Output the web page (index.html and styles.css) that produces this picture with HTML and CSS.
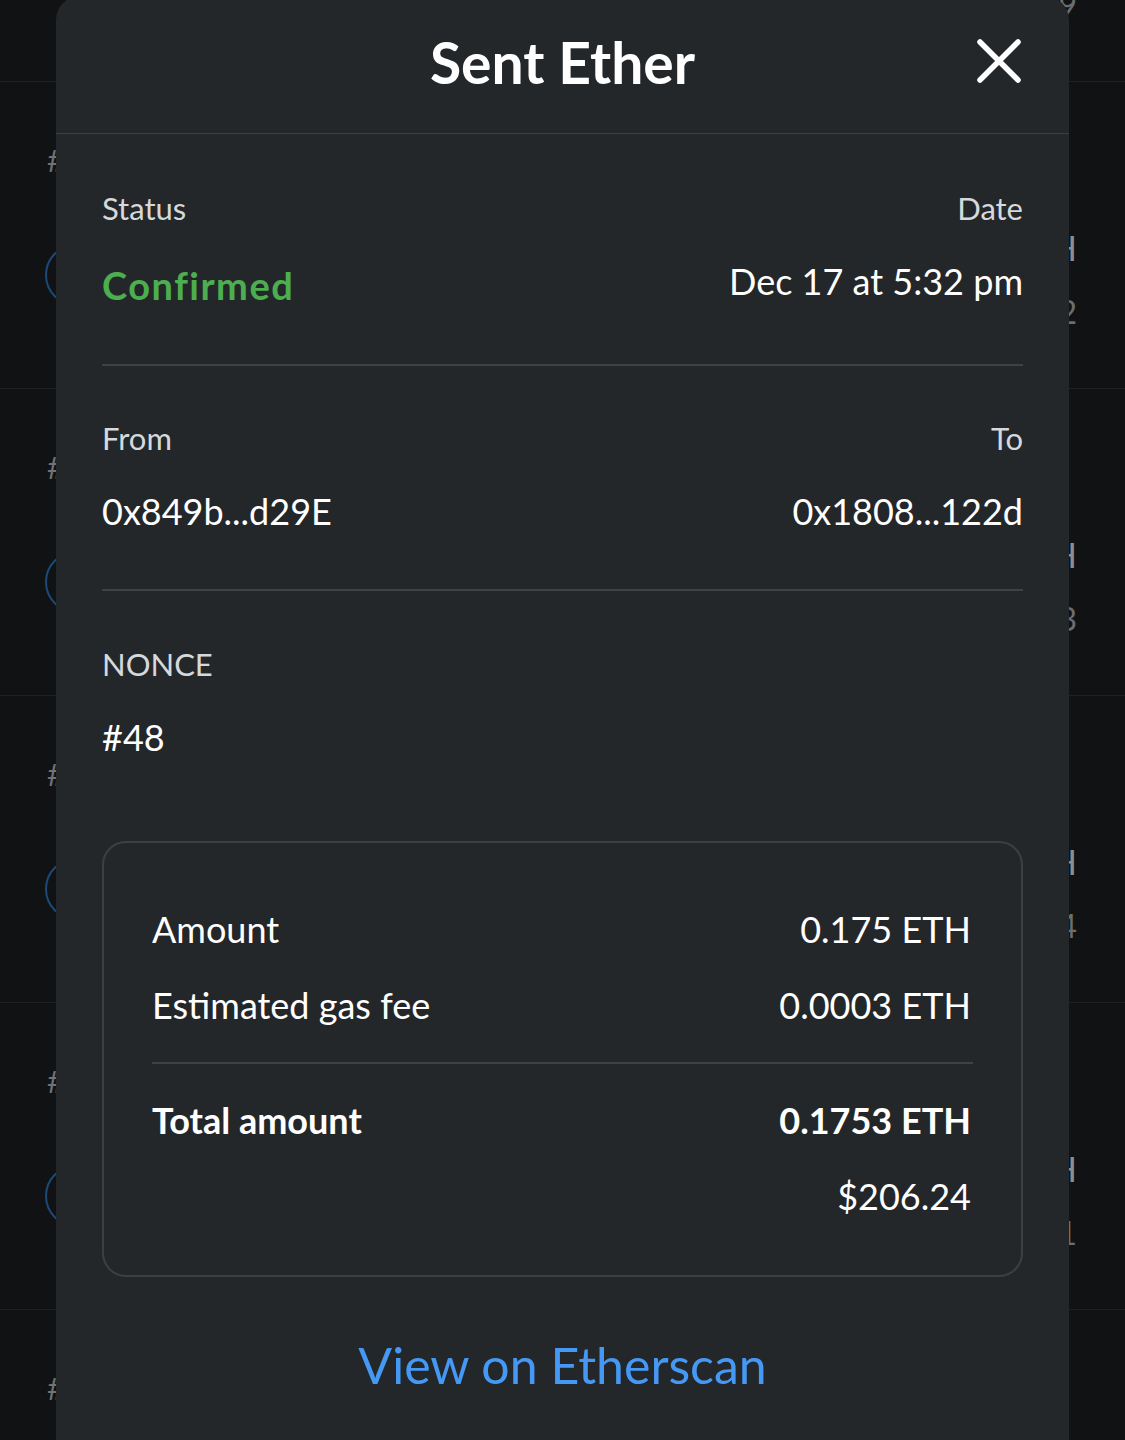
FILE: index.html
```html
<!DOCTYPE html>
<html>
<head>
<meta charset="utf-8">
<link rel="stylesheet" href="styles.css">
</head>
<body>
<div class="list">
  <div class="row"><div class="row-left"><div class="hash">#49</div><div class="ring"></div></div><div class="row-right"><div class="eth">-0.1 ETH</div><div class="fiat">-$117.89</div></div></div>
  <div class="row"><div class="row-left"><div class="hash">#48</div><div class="ring"></div></div><div class="row-right"><div class="eth">-0.175 ETH</div><div class="fiat">-$206.22</div></div></div>
  <div class="row"><div class="row-left"><div class="hash">#47</div><div class="ring"></div></div><div class="row-right"><div class="eth">-0.2 ETH</div><div class="fiat">-$235.73</div></div></div>
  <div class="row"><div class="row-left"><div class="hash">#46</div><div class="ring"></div></div><div class="row-right"><div class="eth">-0.05 ETH</div><div class="fiat">-$58.94</div></div></div>
  <div class="row"><div class="row-left"><div class="hash">#45</div><div class="ring"></div></div><div class="row-right"><div class="eth">-0.3 ETH</div><div class="fiat">-$353.61</div></div></div>
  <div class="row"><div class="row-left"><div class="hash">#44</div><div class="ring"></div></div><div class="row-right"><div class="eth">-0.1 ETH</div><div class="fiat">-$117.87</div></div></div>
</div>

<div class="modal">
  <div class="modal-header">
    <h1 class="title">Sent Ether</h1>
    <svg class="close" width="44" height="44" viewBox="0 0 44 44"><path d="M3 3 L41 41 M41 3 L3 41" stroke="#ffffff" stroke-width="5.5" stroke-linecap="round" fill="none"/></svg>
  </div>
  <div class="modal-body">
    <div class="section section-first">
      <div class="pair">
        <div class="col">
          <div class="label">Status</div>
          <div class="status">Confirmed</div>
        </div>
        <div class="col col-right">
          <div class="label">Date</div>
          <div class="value">Dec 17 at 5:32 pm</div>
        </div>
      </div>
    </div>
    <div class="section section-second">
      <div class="pair">
        <div class="col">
          <div class="label">From</div>
          <div class="value">0x849b...d29E</div>
        </div>
        <div class="col col-right">
          <div class="label">To</div>
          <div class="value">0x1808...122d</div>
        </div>
      </div>
    </div>
    <div class="section section-nonce">
      <div class="label">NONCE</div>
      <div class="value">#48</div>
    </div>
    <div class="summary">
      <div class="sum-row"><span>Amount</span><span>0.175 ETH</span></div>
      <div class="sum-row sum-gap"><span>Estimated gas fee</span><span>0.0003 ETH</span></div>
      <div class="sum-divider"></div>
      <div class="sum-row sum-total"><span>Total amount</span><span>0.1753 ETH</span></div>
      <div class="sum-row sum-gap sum-fiat"><span>$206.24</span></div>
    </div>
    <div class="link">View on Etherscan</div>
  </div>
</div>
</body>
</html>
```
FILE: styles.css
```css
html, body {
  margin: 0;
  padding: 0;
}
body {
  width: 1125px;
  height: 1440px;
  overflow: hidden;
  background: #111214;
  font-family: "Lato", "Open Sans", sans-serif;
  position: relative;
}

/* background list */
.list {
  margin-top: -225px;
}
.row {
  height: 306px;
  border-bottom: 1px solid #1f2124;
  display: flex;
  justify-content: space-between;
}
.row-left {
  padding-left: 47px;
  padding-top: 58px;
}
.hash {
  font-size: 30px;
  line-height: 40px;
  color: #707276;
}
.ring {
  width: 58px;
  height: 58px;
  border: 2px solid #1b4a7a;
  border-radius: 50%;
  margin-top: 64px;
  margin-left: -2px;
}
.row-right {
  padding-right: 48px;
  padding-top: 146px;
  text-align: right;
}
.eth {
  font-size: 34px;
  line-height: 40px;
  color: #8b8e92;
}
.fiat {
  font-size: 32px;
  line-height: 40px;
  margin-top: 24px;
  color: #6a6d71;
}

/* modal */
.modal {
  position: absolute;
  left: 56px;
  top: -4px;
  width: 1013px;
  height: 1480px;
  background: #24272a;
  border-radius: 24px 24px 0 0;
}
.modal-header {
  height: 137px;
  border-bottom: 1px solid #3b3e42;
  display: flex;
  align-items: center;
  justify-content: center;
  position: relative;
}
.title {
  margin: 0 0 6px;
  font-size: 57px;
  font-weight: 700;
  color: #ffffff;
  line-height: 64px;
}
.close {
  position: absolute;
  right: 48px;
  top: 43px;
}
.modal-body {
  padding: 0 46px;
}
.section {
  border-bottom: 2px solid #3e4246;
}
.section-first {
  padding: 54px 0 57px;
}
.section-second {
  padding: 52px 0 56px;
}
.section-nonce {
  border-bottom: none;
  padding: 53px 0 0;
}
.pair {
  display: flex;
  justify-content: space-between;
}
.col-right {
  text-align: right;
}
.label {
  font-size: 31px;
  line-height: 40px;
  color: #d6d9dc;
}
.value {
  font-size: 36px;
  line-height: 44px;
  margin-top: 31px;
  color: #ffffff;
}
.status {
  font-size: 38px;
  line-height: 44px;
  margin-top: 35px;
  font-weight: 700;
  letter-spacing: 1.5px;
  color: #4cae4f;
}

.summary {
  margin-top: 82px;
  height: 436px;
  box-sizing: border-box;
  border: 2px solid #3c4044;
  border-radius: 24px;
  padding: 64px 50px 0 48px;
}
.sum-row {
  display: flex;
  justify-content: space-between;
  font-size: 36px;
  line-height: 44px;
  color: #ffffff;
}
.sum-gap {
  margin-top: 32px;
}
.sum-divider {
  height: 2px;
  background: #3e4246;
  margin-top: 35px;
  margin-right: -2px;
}
.sum-total {
  margin-top: 34px;
  font-weight: 700;
}
.sum-fiat {
  justify-content: flex-end;
}
.link {
  margin-top: 58px;
  text-align: center;
  font-size: 50px;
  line-height: 60px;
  color: #4599f4;
}
```
